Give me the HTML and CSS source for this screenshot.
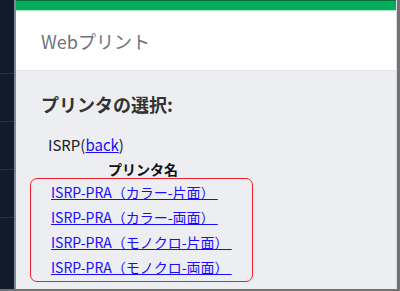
FILE: index.html
```html
<!DOCTYPE html>
<html lang="ja">
<head>
<meta charset="UTF-8" />
<meta name="viewport" content="width=device-width, initial-scale=1" />
<title>Webプリント</title>
<link rel="stylesheet" href="styles.css">
</head>
<body>

<div class="frame">
  <aside class="sidebar">
    <div class="side-item"></div>
    <div class="side-item"></div>
    <div class="side-item"></div>
    <div class="side-item"></div>
  </aside>

  <div class="main">
    <div class="topbar"></div>
    <header class="header">Webプリント</header>

    <section class="content">
      <h2 class="title">プリンタの選択:</h2>
      <p class="server">ISRP(<a href="#">back</a>)</p>

      <table class="printers">
        <thead>
          <tr><th>プリンタ名</th></tr>
        </thead>
        <tbody>
          <tr><td><a href="#">ISRP-PRA（カラー-片面） </a></td></tr>
          <tr><td><a href="#">ISRP-PRA（カラー-両面） </a></td></tr>
          <tr><td><a href="#">ISRP-PRA（モノクロ-片面） </a></td></tr>
          <tr><td><a href="#">ISRP-PRA（モノクロ-両面） </a></td></tr>
        </tbody>
      </table>
      <div class="mark"></div>
    </section>
  </div>
</div>

</body>
</html>
```

FILE: styles.css
```css
body {
  margin: 0;
  font-family: "Noto Sans CJK JP", "Noto Sans", sans-serif;
  background: #fff;
  width: 400px;
  height: 291px;
  overflow: hidden;
}
.frame {
  display: flex;
  height: 291px;
  box-sizing: border-box;
  border-right: 3px solid #727272;
  border-bottom: 2px solid #727272;
}
.sidebar {
  width: 14px;
  flex-shrink: 0;
  background: #101c29;
  border-right: 2px solid #7d8796;
  padding-top: 73px;
}
.side-item {
  height: 39px;
  border-top: 1px solid #25313d;
  margin-bottom: 8px;
}
.main {
  flex: 1;
  display: flex;
  flex-direction: column;
  border-right: 1px solid #dcdde0;
}
.topbar {
  height: 9px;
  background: #04ad5c;
  border-top: 1px solid #0b6b3c;
  border-bottom: 1px solid #b8e6cb;
}
.header {
  height: 59px;
  background: #fff;
  border-bottom: 1px solid #e6e7ea;
  padding-left: 25px;
  display: flex;
  align-items: center;
  font-size: 18px;
  color: #6b737c;
}
.content {
  flex: 1;
  background: #eceef1;
  padding: 20px 0 0 25px;
  position: relative;
}
.title {
  margin: 0;
  font-size: 18px;
  font-weight: bold;
  color: #333;
  line-height: 26px;
}
.server {
  margin: 18px 0 0 7px;
  font-size: 15px;
  color: #222;
  line-height: 20px;
}
a {
  color: #1a0dff;
}
.printers {
  margin: 3px 0 0 7px;
  border-collapse: collapse;
  width: 190px;
}
.printers th {
  font-size: 14px;
  color: #111;
  line-height: 22px;
  padding: 0;
}
.printers td {
  font-size: 14px;
  line-height: 25px;
  padding: 0 0 0 3px;
  white-space: pre;
}
.mark {
  position: absolute;
  left: 14px;
  top: 107px;
  width: 221px;
  height: 102px;
  border: 1.5px solid #f0202a;
  border-radius: 7px;
}
```
